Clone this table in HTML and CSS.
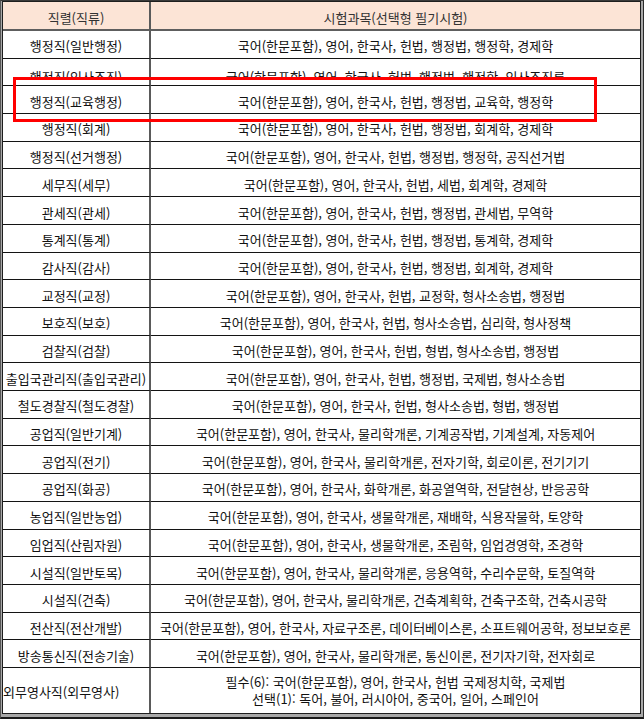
FILE: index.html
```html
<!DOCTYPE html>
<html lang="ko">
<head>
<meta charset="utf-8">
<title>직렬별 시험과목</title>
<link rel="stylesheet" href="styles.css">
</head>
<body>
<div class="frame">
  <div class="sheet">
    <div class="cell head left">직렬(직류)</div>
    <div class="cell head right">시험과목(선택형 필기시험)</div>

    <div class="cell left">행정직(일반행정)</div>
    <div class="cell right">국어(한문포함), 영어, 한국사, 헌법, 행정법, 행정학, 경제학</div>

    <div class="cell left clip-bottom"><span>행정직(인사조직)</span></div>
    <div class="cell right clip-bottom"><span>국어(한문포함), 영어, 한국사, 헌법, 행정법, 행정학, 인사조직론</span></div>

    <div class="cell left">행정직(교육행정)</div>
    <div class="cell right">국어(한문포함), 영어, 한국사, 헌법, 행정법, 교육학, 행정학</div>

    <div class="cell left">행정직(회계)</div>
    <div class="cell right">국어(한문포함), 영어, 한국사, 헌법, 행정법, 회계학, 경제학</div>

    <div class="cell left">행정직(선거행정)</div>
    <div class="cell right">국어(한문포함), 영어, 한국사, 헌법, 행정법, 행정학, 공직선거법</div>

    <div class="cell left">세무직(세무)</div>
    <div class="cell right">국어(한문포함), 영어, 한국사, 헌법, 세법, 회계학, 경제학</div>

    <div class="cell left">관세직(관세)</div>
    <div class="cell right">국어(한문포함), 영어, 한국사, 헌법, 행정법, 관세법, 무역학</div>

    <div class="cell left">통계직(통계)</div>
    <div class="cell right">국어(한문포함), 영어, 한국사, 헌법, 행정법, 통계학, 경제학</div>

    <div class="cell left">감사직(감사)</div>
    <div class="cell right">국어(한문포함), 영어, 한국사, 헌법, 행정법, 회계학, 경제학</div>

    <div class="cell left">교정직(교정)</div>
    <div class="cell right">국어(한문포함), 영어, 한국사, 헌법, 교정학, 형사소송법, 행정법</div>

    <div class="cell left">보호직(보호)</div>
    <div class="cell right">국어(한문포함), 영어, 한국사, 헌법, 형사소송법, 심리학, 형사정책</div>

    <div class="cell left">검찰직(검찰)</div>
    <div class="cell right">국어(한문포함), 영어, 한국사, 헌법, 형법, 형사소송법, 행정법</div>

    <div class="cell left">출입국관리직(출입국관리)</div>
    <div class="cell right">국어(한문포함), 영어, 한국사, 헌법, 행정법, 국제법, 형사소송법</div>

    <div class="cell left">철도경찰직(철도경찰)</div>
    <div class="cell right">국어(한문포함), 영어, 한국사, 헌법, 형사소송법, 형법, 행정법</div>

    <div class="cell left">공업직(일반기계)</div>
    <div class="cell right">국어(한문포함), 영어, 한국사, 물리학개론, 기계공작법, 기계설계, 자동제어</div>

    <div class="cell left">공업직(전기)</div>
    <div class="cell right">국어(한문포함), 영어, 한국사, 물리학개론, 전자기학, 회로이론, 전기기기</div>

    <div class="cell left">공업직(화공)</div>
    <div class="cell right">국어(한문포함), 영어, 한국사, 화학개론, 화공열역학, 전달현상, 반응공학</div>

    <div class="cell left">농업직(일반농업)</div>
    <div class="cell right">국어(한문포함), 영어, 한국사, 생물학개론, 재배학, 식용작물학, 토양학</div>

    <div class="cell left">임업직(산림자원)</div>
    <div class="cell right">국어(한문포함), 영어, 한국사, 생물학개론, 조림학, 임업경영학, 조경학</div>

    <div class="cell left">시설직(일반토목)</div>
    <div class="cell right">국어(한문포함), 영어, 한국사, 물리학개론, 응용역학, 수리수문학, 토질역학</div>

    <div class="cell left">시설직(건축)</div>
    <div class="cell right">국어(한문포함), 영어, 한국사, 물리학개론, 건축계획학, 건축구조학, 건축시공학</div>

    <div class="cell left">전산직(전산개발)</div>
    <div class="cell right">국어(한문포함), 영어, 한국사, 자료구조론, 데이터베이스론, 소프트웨어공학, 정보보호론</div>

    <div class="cell left">방송통신직(전송기술)</div>
    <div class="cell right">국어(한문포함), 영어, 한국사, 물리학개론, 통신이론, 전기자기학, 전자회로</div>

    <div class="cell left last start">외무영사직(외무영사)</div>
    <div class="cell right last multi">필수(6): 국어(한문포함), 영어, 한국사, 헌법 국제정치학, 국제법<br>선택(1): 독어, 불어, 러시아어, 중국어, 일어, 스페인어</div>
  </div>
  <div class="highlight"></div>
</div>
</body>
</html>
```

FILE: styles.css
```css
* {
  box-sizing: border-box;
}

html, body {
  margin: 0;
  padding: 0;
  background: #ffffff;
}

body {
  font-family: "Noto Sans CJK KR", "Noto Sans", "Liberation Sans", sans-serif;
  font-size: 13px;
  color: #111111;
}

.frame {
  position: relative;
  width: 644px;
  height: 719px;
  border-style: solid;
  border-color: #3a3a3a #2a2a2a #1a1a1a #555555;
  border-width: 1px 1px 2px 1px;
  padding: 0 2px 3px 1px;
  background: #a8a8a8;
}

.sheet {
  display: grid;
  grid-template-columns: 148px 1fr;
  grid-template-rows: 29px repeat(23, 1fr) 45px;
  width: 639px;
  height: 713px;
  border: 1px solid #1e1e1e;
  background: #ffffff;
}

.cell {
  display: flex;
  align-items: center;
  justify-content: center;
  padding-top: 3px;
  border-bottom: 1px solid #141414;
  white-space: nowrap;
  overflow: hidden;
  line-height: 15px;
}

.left {
  border-right: 2px solid #5a5a5a;
}

.head {
  background: #fce4d6;
  border-bottom: 2px solid #5e5e5e;
  color: #333333;
}

.last {
  border-bottom: none;
}

.start {
  justify-content: flex-start;
  padding-left: 0;
}

.multi {
  text-align: center;
  line-height: 17px;
  padding-top: 0;
}

.clip-bottom span {
  display: block;
  height: 12px;
  margin-top: 1px;
  overflow: hidden;
  line-height: 17px;
}

.highlight {
  position: absolute;
  left: 12px;
  top: 76px;
  width: 584px;
  height: 45px;
  border: 3px solid #ff0000;
}
```
